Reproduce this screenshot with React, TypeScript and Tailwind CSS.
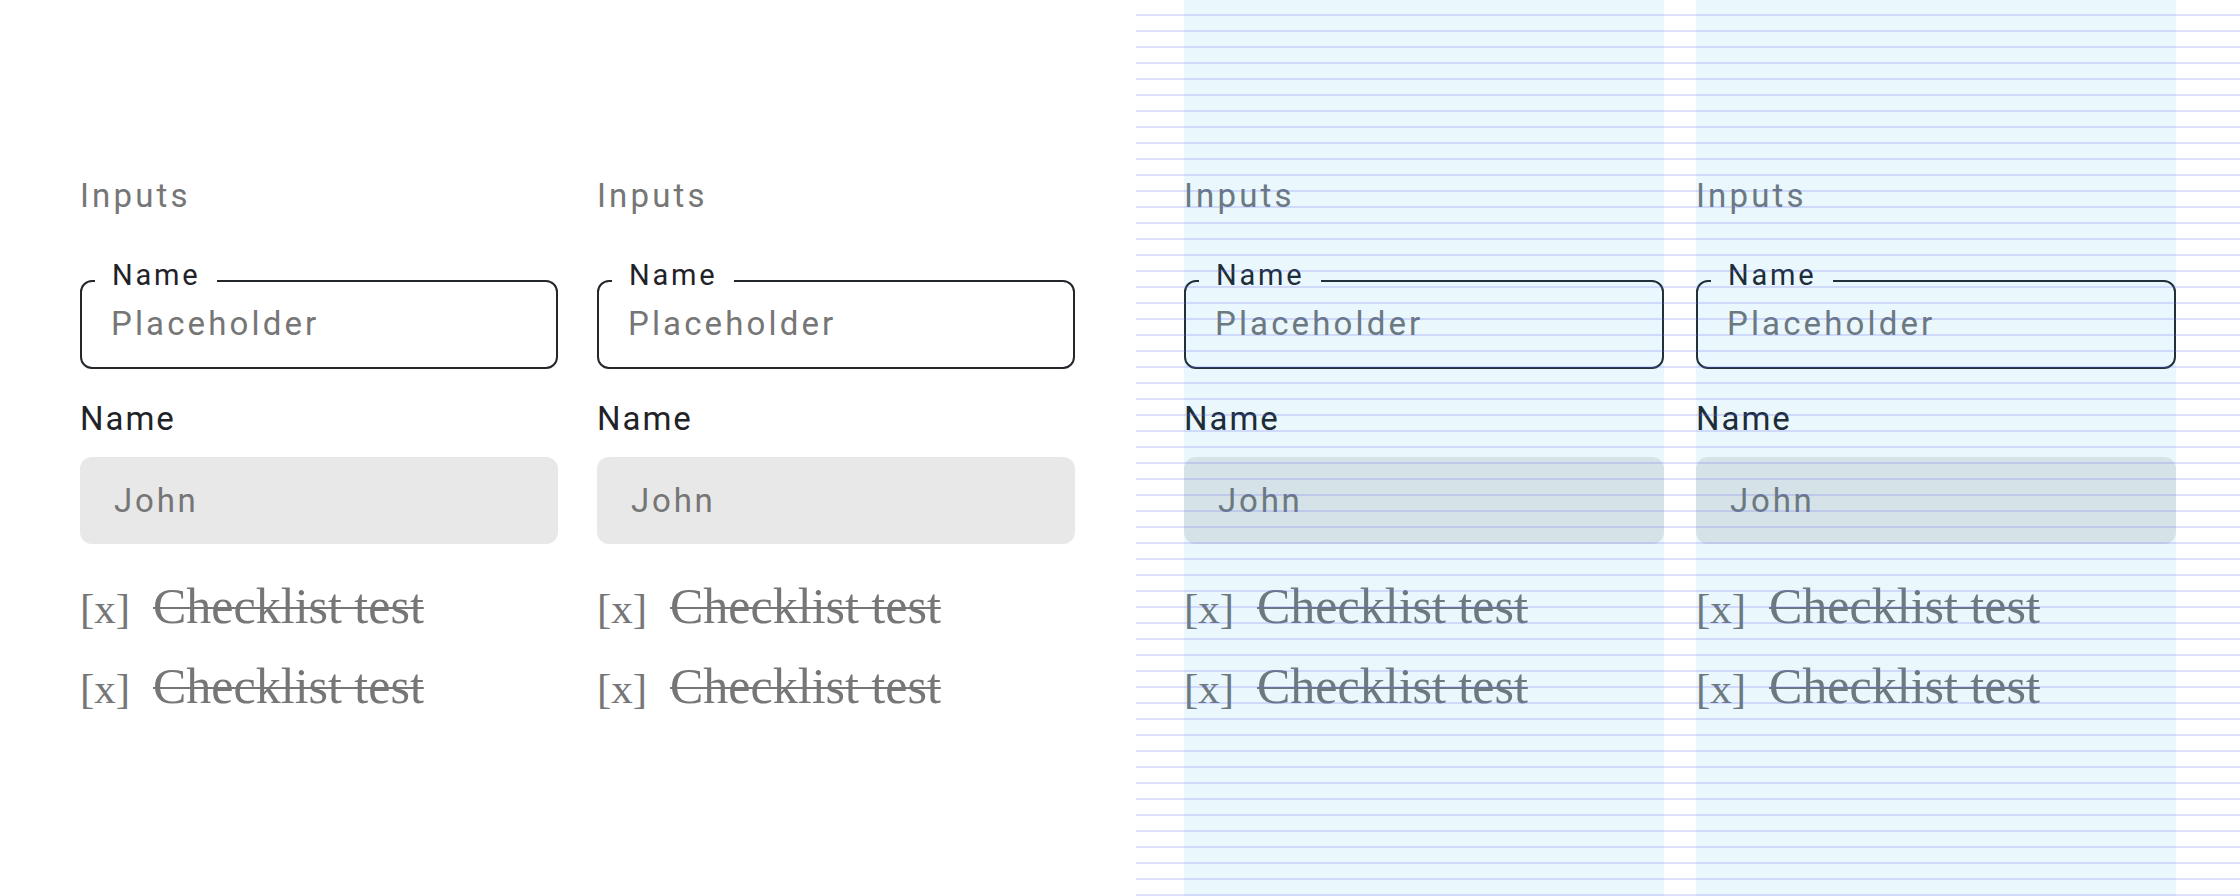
import React from 'react';

const sans = "font-['Roboto','Noto_Sans',sans-serif]";
const serif = "font-['Liberation_Serif','Times_New_Roman',serif]";

const InputsColumn: React.FC = () => (
  <div className="flex flex-col pt-[172px]">
    <div className={`${sans} text-[33px] leading-[48px] tracking-[0.095em] text-[#767676]`}>Inputs</div>

    <fieldset className="mt-[38px] rounded-[12px] border-2 border-[#23272b] pl-[13px] pr-[13px] pb-[23px]">
      <legend className={`${sans} px-[17px] pb-[12px] text-[29px] leading-[34px] tracking-[0.095em] text-[#1f2328]`}>Name</legend>
      <div className={`${sans} pl-[16px] text-[33px] leading-[40px] tracking-[0.095em] text-[#767676]`}>Placeholder</div>
    </fieldset>

    <label className={`${sans} mt-[30px] text-[33px] leading-[40px] tracking-[0.06em] text-[#1f2328]`}>Name</label>
    <div className="mt-[18px] flex h-[87px] items-center rounded-[12px] bg-[#e8e8e8] pl-[34px]">
      <span className={`${sans} text-[33px] tracking-[0.085em] text-[#767676]`}>John</span>
    </div>

    <ul className="mt-[34px] flex flex-col gap-[21px]">
      {[0, 1].map(i => (
        <li key={i} className="flex items-baseline text-[#767676]">
          <span className={`${serif} w-[73px] text-[43px] leading-[56px]`}>[x]</span>
          <span className={`${serif} text-[50px] leading-[56px] line-through decoration-[2px]`}>Checklist test</span>
        </li>
      ))}
    </ul>
  </div>
);

export default function App() {
  return (
    <div className="relative flex h-[896px] w-[2240px] overflow-hidden bg-white">
      <div className="grid w-[1136px] grid-cols-[478px_478px] gap-x-[39px] pl-[80px]">
        <InputsColumn />
        <InputsColumn />
      </div>

      <div className="relative grid w-[1104px] grid-cols-[480px_480px] gap-x-[32px] pl-[48px]">
        <InputsColumn />
        <InputsColumn />

        {/* baseline grid overlay */}
        <div className="pointer-events-none absolute inset-0 flex gap-x-[32px] pl-[48px]">
          <div className="h-full w-[480px] bg-[rgba(14,165,233,0.085)]" />
          <div className="h-full w-[480px] bg-[rgba(14,165,233,0.085)]" />
        </div>
        <div className="pointer-events-none absolute inset-0 bg-[repeating-linear-gradient(to_bottom,transparent_0px,transparent_14px,rgba(99,102,241,0.2)_14px,rgba(99,102,241,0.2)_16px)]" />
      </div>
    </div>
  );
}
